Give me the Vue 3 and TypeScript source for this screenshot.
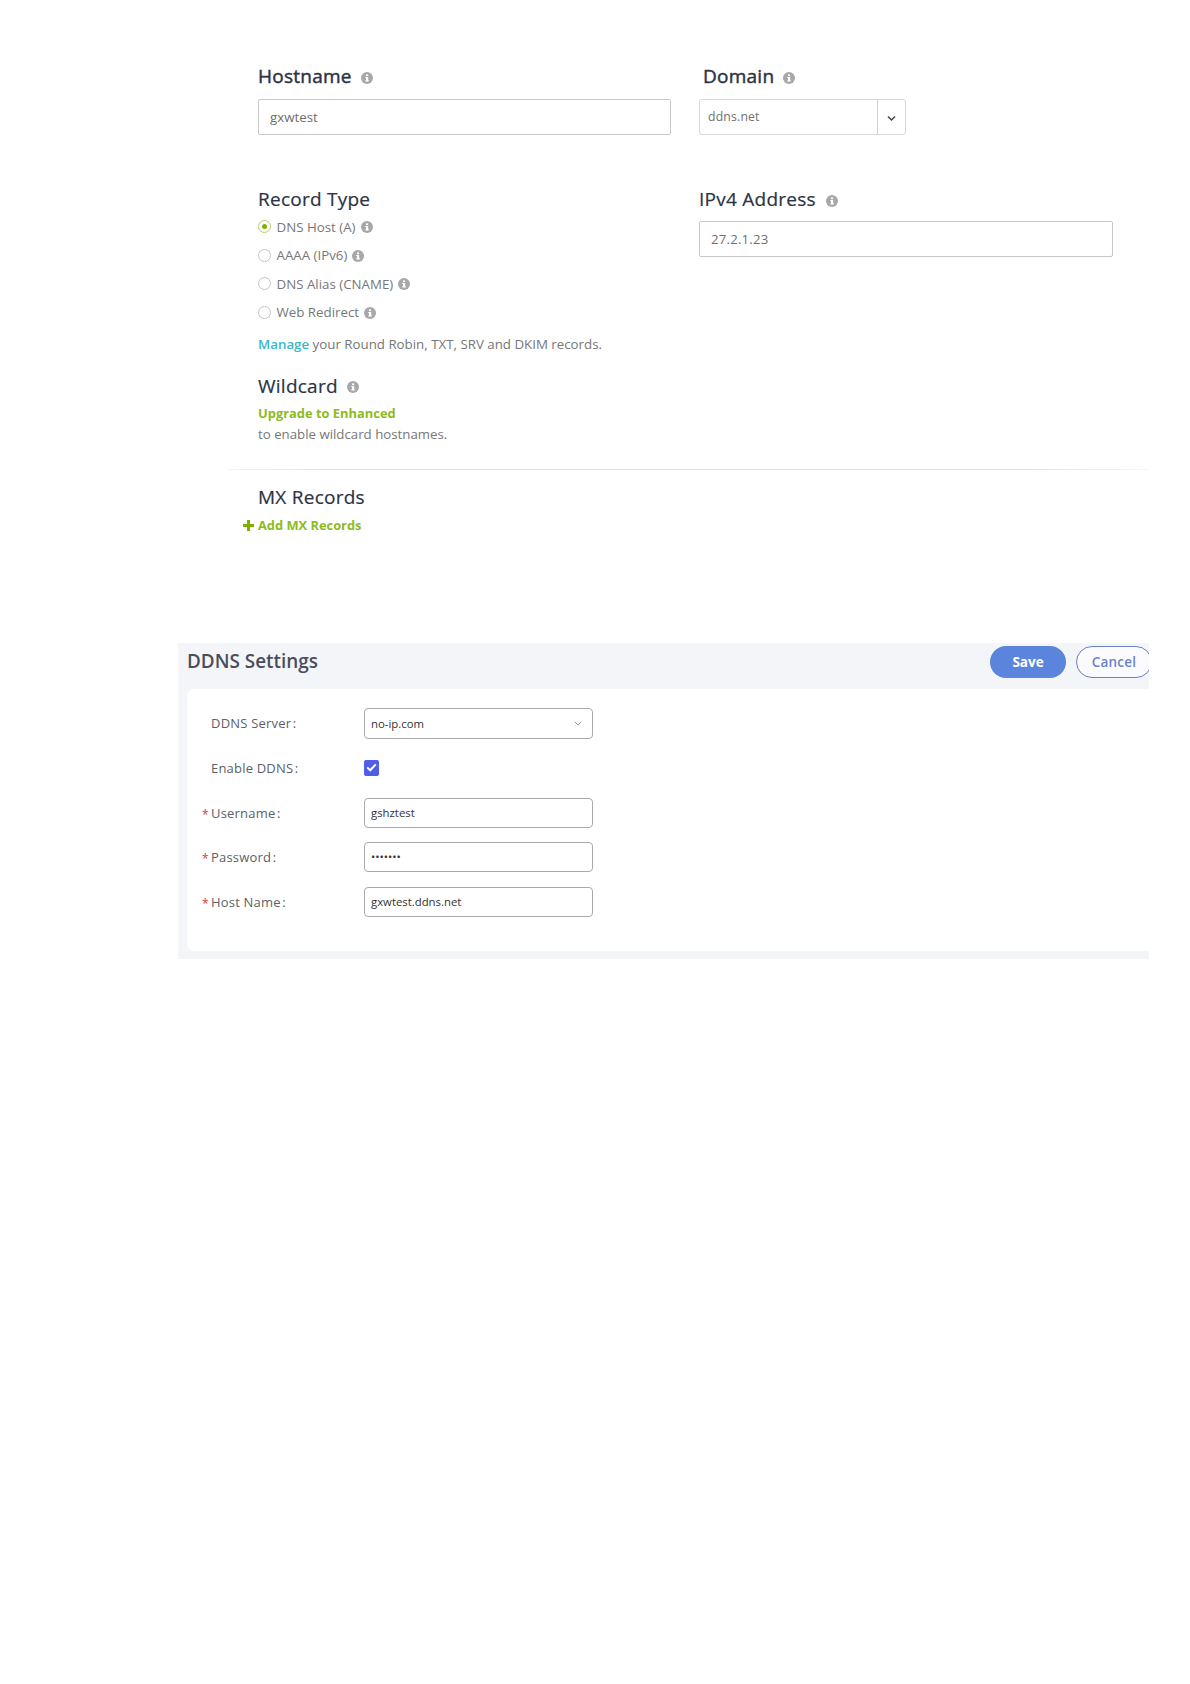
<script setup lang="ts">
const radios = [
  { label: 'DNS Host (A)', on: true },
  { label: 'AAAA (IPv6)', on: false },
  { label: 'DNS Alias (CNAME)', on: false },
  { label: 'Web Redirect', on: false },
]
const fields = [
  { label: 'Username', value: 'gshztest', cls: 'f-user' },
  { label: 'Password', value: '•••••••', cls: 'f-pass' },
  { label: 'Host Name', value: 'gxwtest.ddns.net', cls: 'f-host' },
]
</script>

<template>
  <div class="page">
    <section class="top">
      <div class="grid">
        <div class="col-left">
          <h2 class="head strong">Hostname <svg class="info" viewBox="0 0 24 24"><circle cx="12" cy="12" r="12" fill="#a8a8a8"/><rect x="10" y="10" width="4.4" height="8.5" fill="#fff"/><rect x="8.4" y="10" width="3" height="2" fill="#fff"/><rect x="8.4" y="16.8" width="7.4" height="2" fill="#fff"/><rect x="10" y="4.8" width="4.2" height="3.4" fill="#fff"/></svg></h2>
          <div class="input big">gxwtest</div>
        </div>
        <div class="col-right">
          <h2 class="head strong dom">Domain <svg class="info" viewBox="0 0 24 24"><circle cx="12" cy="12" r="12" fill="#a8a8a8"/><rect x="10" y="10" width="4.4" height="8.5" fill="#fff"/><rect x="8.4" y="10" width="3" height="2" fill="#fff"/><rect x="8.4" y="16.8" width="7.4" height="2" fill="#fff"/><rect x="10" y="4.8" width="4.2" height="3.4" fill="#fff"/></svg></h2>
          <div class="domain">
            <span class="domain-val">ddns.net</span>
            <span class="domain-btn"><svg width="9" height="7" viewBox="0 0 9 7"><path d="M1 1.5 4.5 5 8 1.5" fill="none" stroke="#444" stroke-width="1.5"/></svg></span>
          </div>
        </div>
      </div>

      <div class="grid second">
        <div class="col-left">
          <h2 class="head">Record Type</h2>
          <div class="radios">
            <div v-for="r in radios" :key="r.label" class="radio-row">
              <span class="radio" :class="{ on: r.on }"></span>
              <span class="radio-label">{{ r.label }}</span>
              <svg class="info small" viewBox="0 0 24 24"><circle cx="12" cy="12" r="12" fill="#a8a8a8"/><rect x="10" y="10" width="4.4" height="8.5" fill="#fff"/><rect x="8.4" y="10" width="3" height="2" fill="#fff"/><rect x="8.4" y="16.8" width="7.4" height="2" fill="#fff"/><rect x="10" y="4.8" width="4.2" height="3.4" fill="#fff"/></svg>
            </div>
          </div>
          <p class="manage"><span class="link">Manage</span> your Round Robin, TXT, SRV and DKIM records.</p>
          <h2 class="head wild">Wildcard <svg class="info" viewBox="0 0 24 24"><circle cx="12" cy="12" r="12" fill="#a8a8a8"/><rect x="10" y="10" width="4.4" height="8.5" fill="#fff"/><rect x="8.4" y="10" width="3" height="2" fill="#fff"/><rect x="8.4" y="16.8" width="7.4" height="2" fill="#fff"/><rect x="10" y="4.8" width="4.2" height="3.4" fill="#fff"/></svg></h2>
          <div class="upgrade">Upgrade to Enhanced</div>
          <div class="enable">to enable wildcard hostnames.</div>
        </div>
        <div class="col-right">
          <h2 class="head">IPv4 Address <svg class="info ipv" viewBox="0 0 24 24"><circle cx="12" cy="12" r="12" fill="#a8a8a8"/><rect x="10" y="10" width="4.4" height="8.5" fill="#fff"/><rect x="8.4" y="10" width="3" height="2" fill="#fff"/><rect x="8.4" y="16.8" width="7.4" height="2" fill="#fff"/><rect x="10" y="4.8" width="4.2" height="3.4" fill="#fff"/></svg></h2>
          <div class="input big wide">27.2.1.23</div>
        </div>
      </div>

      <hr class="rule" />

      <div class="mx">
        <h2 class="head">MX Records</h2>
        <div class="add"><svg class="plus" viewBox="0 0 11 11"><path d="M4 0h3v4h4v3H7v4H4V7H0V4h4z" fill="#7fb000"/></svg>Add MX Records</div>
      </div>
    </section>

    <section class="panel">
      <header class="panel-head">
        <h1 class="title">DDNS Settings</h1>
        <div class="actions">
          <span class="btn save">Save</span>
          <span class="btn cancel">Cancel</span>
        </div>
      </header>
      <div class="card">
        <div class="row r-server">
          <label class="lab">DDNS Server<span class="colon">:</span></label>
          <div class="ctl select">
            <span>no-ip.com</span>
            <svg width="8" height="5" viewBox="0 0 8 5"><path d="M.7.7 4 4 7.3.7" fill="none" stroke="#999" stroke-width="1"/></svg>
          </div>
        </div>
        <div class="row r-enable">
          <label class="lab">Enable DDNS<span class="colon">:</span></label>
          <span class="check"><svg width="11" height="9" viewBox="0 0 11 9"><path d="M1.2 4.4 4.2 7.3 9.8 1.4" fill="none" stroke="#fff" stroke-width="2"/></svg></span>
        </div>
        <div v-for="f in fields" :key="f.label" class="row" :class="f.cls">
          <label class="lab"><i class="req">*</i>{{ f.label }}<span class="colon">:</span></label>
          <div class="ctl">{{ f.value }}</div>
        </div>
      </div>
    </section>
  </div>
</template>

<style>
html, body { margin: 0; background: #fff; }
</style>

<style scoped>
.page {
  width: 1190px;
  height: 1684px;
  overflow: hidden;
  font-family: "Open Sans", "Liberation Sans", sans-serif;
  color: #666;
  box-sizing: border-box;
  padding-top: 64px;
}
.top { padding-left: 258px; width: 891px; }
.grid { display: flex; gap: 28px; }
.second { margin-top: 52px; }
.col-left { width: 413px; }
.col-right { width: 414px; }
.head {
  margin: 0;
  font-size: 19px;
  line-height: 24px;
  font-weight: 500;
  color: #2b3345;
  display: flex;
  align-items: center;
  letter-spacing: 0.25px;
  -webkit-text-stroke: 0.2px #2b3345;
}
.strong { -webkit-text-stroke: 0.45px #2b3345; }
.dom { padding-left: 4px; }
.info { width: 12px; height: 12px; margin-left: 9px; margin-top: 3px; flex: none; }
.info.ipv { margin-left: 10px; }
.info.small { margin: 1px 0 0 5px; }
.input {
  box-sizing: border-box;
  border: 1px solid #c8c8c8;
  border-radius: 2px;
  background: #fff;
}
.big {
  margin-top: 11px;
  height: 36px;
  line-height: 34px;
  padding-left: 11px;
  font-size: 13.3px;
  color: #6e6e6e;
}
.wide { margin-top: 10px; font-size: 13.2px; letter-spacing: 0.2px; line-height: 35px; }
.domain {
  margin-top: 11px;
  width: 207px;
  height: 36px;
  box-sizing: border-box;
  border: 1px solid #d8d8d8;
  border-radius: 3px;
  display: flex;
  font-size: 12.2px;
  color: #707070;
  line-height: 34px;
}
.domain-val { width: 178px; box-sizing: border-box; padding-left: 8px; border-right: 1px solid #d0d0d0; letter-spacing: 0.2px; }
.domain-btn { flex: 1; display: flex; align-items: center; justify-content: center; padding-top: 2px; }
.radios { margin-top: 1.4px; }
.radio-row {
  height: 28.5px;
  display: flex;
  align-items: center;
  font-size: 13.3px;
  color: #777;
}
.radio {
  width: 13px;
  height: 13px;
  box-sizing: border-box;
  border: 1px solid #c4c4c4;
  border-radius: 50%;
  margin-right: 5.5px;
  background: #fff;
  display: flex;
  align-items: center;
  justify-content: center;
}
.radio.on { border-color: #b5cf70; }
.radio.on::after {
  content: "";
  width: 5px;
  height: 5px;
  border-radius: 50%;
  background: #7fb000;
}
.manage {
  margin: 7.8px 0 0;
  font-size: 13.3px;
  line-height: 20px;
  color: #777;
  white-space: nowrap;
}
.link { color: #3cb8c8; font-weight: 600; }
.wild { margin-top: 19.4px; }
.upgrade { margin-top: 5px; font-size: 12.9px; line-height: 20px; font-weight: 700; color: #8dbb1e; }
.enable { margin-top: 1px; font-size: 13.25px; line-height: 20px; color: #777; }
.rule {
  margin: 25px 0 0 -30px;
  width: 921px;
  height: 1px;
  border: 0;
  background: linear-gradient(90deg, #f4f4f4, #dfdfdf 12%, #dfdfdf 85%, #f6f6f6);
}
.mx { margin-top: 15px; }
.add {
  position: relative;
  margin-top: 6px;
  font-size: 12.85px;
  line-height: 20px;
  font-weight: 700;
  color: #8dbb1e;
}
.plus { position: absolute; left: -15px; top: 5px; width: 11px; height: 11px; }
.panel {
  margin: 108px 0 0 178px;
  width: 971px;
  height: 316px;
  overflow: hidden;
  background: #f4f5f8;
  box-sizing: border-box;
  padding-left: 9px;
}
.panel-head { height: 46px; display: flex; align-items: center; justify-content: space-between; padding-bottom: 8px; box-sizing: border-box; }
.title { margin: 0; font-size: 18.9px; line-height: 27px; font-weight: 600; color: #4b4e58; }
.actions { display: flex; gap: 10px; margin-right: -3px; }
.btn {
  width: 76px;
  height: 32px;
  box-sizing: border-box;
  border-radius: 16px;
  display: flex;
  align-items: center;
  justify-content: center;
  font-size: 13.5px;
  font-weight: 700;
}
.save { background: #5b84dc; color: #fff; }
.cancel { background: #fbfbfd; border: 1px solid #6b7fc6; color: #6a82cc; font-weight: 600; letter-spacing: 0.2px; }
.card {
  height: 262px;
  background: #fff;
  border-radius: 8px 0 0 8px;
  box-sizing: border-box;
  padding-top: 19px;
}
.row { display: flex; align-items: center; position: relative; }
.r-server { height: 31px; }
.r-enable { height: 16px; margin-top: 21px; }
.f-user { height: 30px; margin-top: 22px; }
.f-pass { height: 30px; margin-top: 14px; }
.f-host { height: 30px; margin-top: 15px; }
.lab { position: relative; width: 153px; margin-left: 24px; font-size: 13px; color: #5c5f66; flex: none; white-space: nowrap; letter-spacing: 0.2px; }
.colon { margin-left: 1.5px; }
.req { position: absolute; left: -9px; top: 2px; color: #d63b32; font-style: normal; font-size: 12px; }
.ctl {
  width: 229px;
  height: 100%;
  box-sizing: border-box;
  border: 1px solid #aaa;
  border-radius: 4px;
  padding: 0 6px;
  display: flex;
  align-items: center;
  font-size: 11.35px;
  color: #333;
  background: #fff;
}
.select { justify-content: space-between; padding-right: 10px; }
.check {
  width: 15px;
  height: 16px;
  border-radius: 2px;
  background: #4f5ee8;
  display: flex;
  align-items: center;
  justify-content: center;
}
</style>
